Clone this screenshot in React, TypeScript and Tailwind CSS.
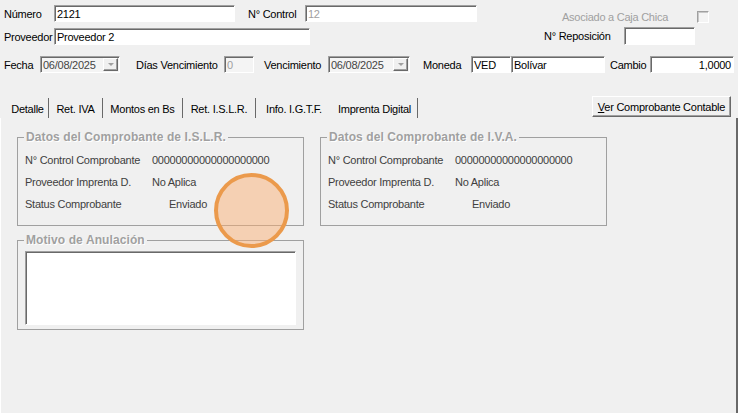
import React from "react";

const sunken =
  "border border-t-[#a0a0a0] border-l-[#a0a0a0] border-b-white border-r-white shadow-[inset_1px_1px_0_#696969]";
const raised =
  "border border-t-white border-l-white border-r-[#696969] border-b-[#696969] shadow-[inset_-1px_-1px_0_#a0a0a0]";

const Box: React.FC<{ className?: string; children?: React.ReactNode }> = ({ className = "", children }) => (
  <div className={`${sunken} h-[17px] flex items-center px-[2px] overflow-hidden whitespace-nowrap ${className}`}>
    {children}
  </div>
);

const DateCombo: React.FC<{ className?: string; value: string }> = ({ className = "", value }) => (
  <div className={`${sunken} h-[17px] flex items-center bg-[#f4f4f4] pl-[2px] pr-[1px] ${className}`}>
    <span className="flex-1 text-[#444]">{value}</span>
    <div className={`${raised} bg-[#f0f0f0] w-[15px] h-[13px] flex items-center justify-center`}>
      <span className="block w-0 h-0 border-l-[3px] border-r-[3px] border-t-[3px] border-l-transparent border-r-transparent border-t-[#a0a0a0]" />
    </div>
  </div>
);

const GroupRow: React.FC<{ label: string; value: string; indent?: boolean }> = ({ label, value, indent }) => (
  <div className="flex items-center h-[22px] text-[#404040]">
    <span className="w-[127px]">{label}</span>
    <span className={indent ? "ml-[17px]" : ""}>{value}</span>
  </div>
);

const Group: React.FC<{ title: string; className?: string; children?: React.ReactNode }> = ({
  title,
  className = "",
  children,
}) => (
  <fieldset className={`border border-[#a0a0a0] w-[287px] px-[7px] ${className}`}>
    <legend className="-ml-[1px] px-[2px] text-[12px] leading-[14px] font-bold tracking-[0.1px] text-[#a0a0a0] [text-shadow:1px_1px_0_#fff]">
      {title}
    </legend>
    {children}
  </fieldset>
);

const tabs = [
  { label: "Detalle", cls: "w-[42px]" },
  { label: "Ret. IVA", cls: "w-[54px]" },
  { label: "Montos en Bs", cls: "w-[80px]" },
  { label: "Ret. I.S.L.R.", cls: "w-[73px]" },
  { label: "Info. I.G.T.F.", cls: "w-[76px]", noSep: true },
  { label: "Imprenta Digital", cls: "w-[86px]" },
];

export default function App() {
  return (
    <div className="relative w-[738px] h-[413px] overflow-hidden bg-[#f0f0f0] flex flex-col text-[11px] leading-[14px] tracking-[-0.25px] text-black font-['Liberation_Sans',Arial,sans-serif]">
      {/* header */}
      <div className="flex h-[50px]">
        <div className="flex flex-col pt-[5px] pl-[4px] gap-[6px]">
          <div className="flex items-center">
            <span className="w-[50px]">Número</span>
            <Box className="w-[181px] bg-white">2121</Box>
            <span className="ml-[13px] w-[57px]">N° Control</span>
            <Box className="w-[172px] bg-white text-[#a0a0a0]">12</Box>
          </div>
          <div className="flex items-center">
            <span className="w-[50px]">Proveedor</span>
            <Box className="w-[256px] bg-white">Proveedor 2</Box>
          </div>
        </div>
        <div className="flex flex-col ml-[53px]">
          <div className="flex items-center h-[12px] mt-[11px]">
            <span className="ml-[32px] w-[135px] text-[#a0a0a0]">Asociado a Caja Chica</span>
            <div className="w-[12px] h-[12px] border border-t-[#a0a0a0] border-l-[#a0a0a0] border-b-white border-r-white bg-[#f4f4f4] shadow-[inset_1px_1px_0_#c8c8c8]" />
          </div>
          <div className="flex items-center mt-[4px]">
            <span className="ml-[14px] w-[80px]">N° Reposición</span>
            <Box className="w-[71px] h-[18px] bg-white" />
          </div>
        </div>
      </div>

      {/* fecha row */}
      <div className="flex items-center mt-[6px] pl-[4px]">
        <span className="w-[36px]">Fecha</span>
        <DateCombo className="w-[80px]" value="06/08/2025" />
        <span className="ml-[16px] w-[88px]">Días Vencimiento</span>
        <Box className="w-[30px] bg-[#f4f4f4] text-[#a0a0a0]">0</Box>
        <span className="ml-[10px] w-[64px]">Vencimiento</span>
        <DateCombo className="w-[82px]" value="06/08/2025" />
        <span className="ml-[13px] w-[48px]">Moneda</span>
        <Box className="w-[40px] bg-white">VED</Box>
        <Box className="w-[94px] bg-white">Bolívar</Box>
        <span className="ml-[5px] w-[40px]">Cambio</span>
        <Box className="w-[84px] bg-white justify-end">1,0000</Box>
      </div>

      {/* tabs */}
      <div className="flex h-[22px] mt-[23px] pl-[7px]">
        {tabs.map((t) => (
          <div
            key={t.label}
            className={`${t.cls} h-[20px] self-end flex items-center justify-center pt-[2px] ${
              t.noSep ? "" : "border-r border-r-[#696969]"
            }`}
          >
            {t.label}
          </div>
        ))}
        <button
          className={`${raised} ml-auto mr-[7px] w-[139px] h-[21px] bg-[#f0f0f0] flex items-center justify-center`}
        >
          <span>
            <span className="underline">V</span>er Comprobante Contable
          </span>
        </button>
      </div>

      {/* panel */}
      <div className="flex-1 border-l border-l-white border-r-2 border-r-[#696969] pt-[12px] pl-[16px]">
        <div className="flex gap-[16px]">
          <Group title="Datos del Comprobante de I.S.L.R." className="h-[96px]">
            <div className="pt-[5px]">
              <GroupRow label="N° Control Comprobante" value="00000000000000000000" />
              <GroupRow label="Proveedor Imprenta D." value="No Aplica" />
              <GroupRow label="Status Comprobante" value="Enviado" indent />
            </div>
          </Group>
          <Group title="Datos del Comprobante de I.V.A." className="h-[96px]">
            <div className="pt-[5px]">
              <GroupRow label="N° Control Comprobante" value="00000000000000000000" />
              <GroupRow label="Proveedor Imprenta D." value="No Aplica" />
              <GroupRow label="Status Comprobante" value="Enviado" indent />
            </div>
          </Group>
        </div>
        <Group title="Motivo de Anulación" className="h-[97px] mt-[7px]">
          <div className={`${sunken} bg-white h-[74px] mt-[4px]`} />
        </Group>
      </div>

      {/* click marker */}
      <div className="absolute left-[214px] top-[173px] w-[75px] h-[75px] rounded-full border-4 border-[#eb9a4c] bg-[rgba(250,172,110,0.47)]" />
    </div>
  );
}
